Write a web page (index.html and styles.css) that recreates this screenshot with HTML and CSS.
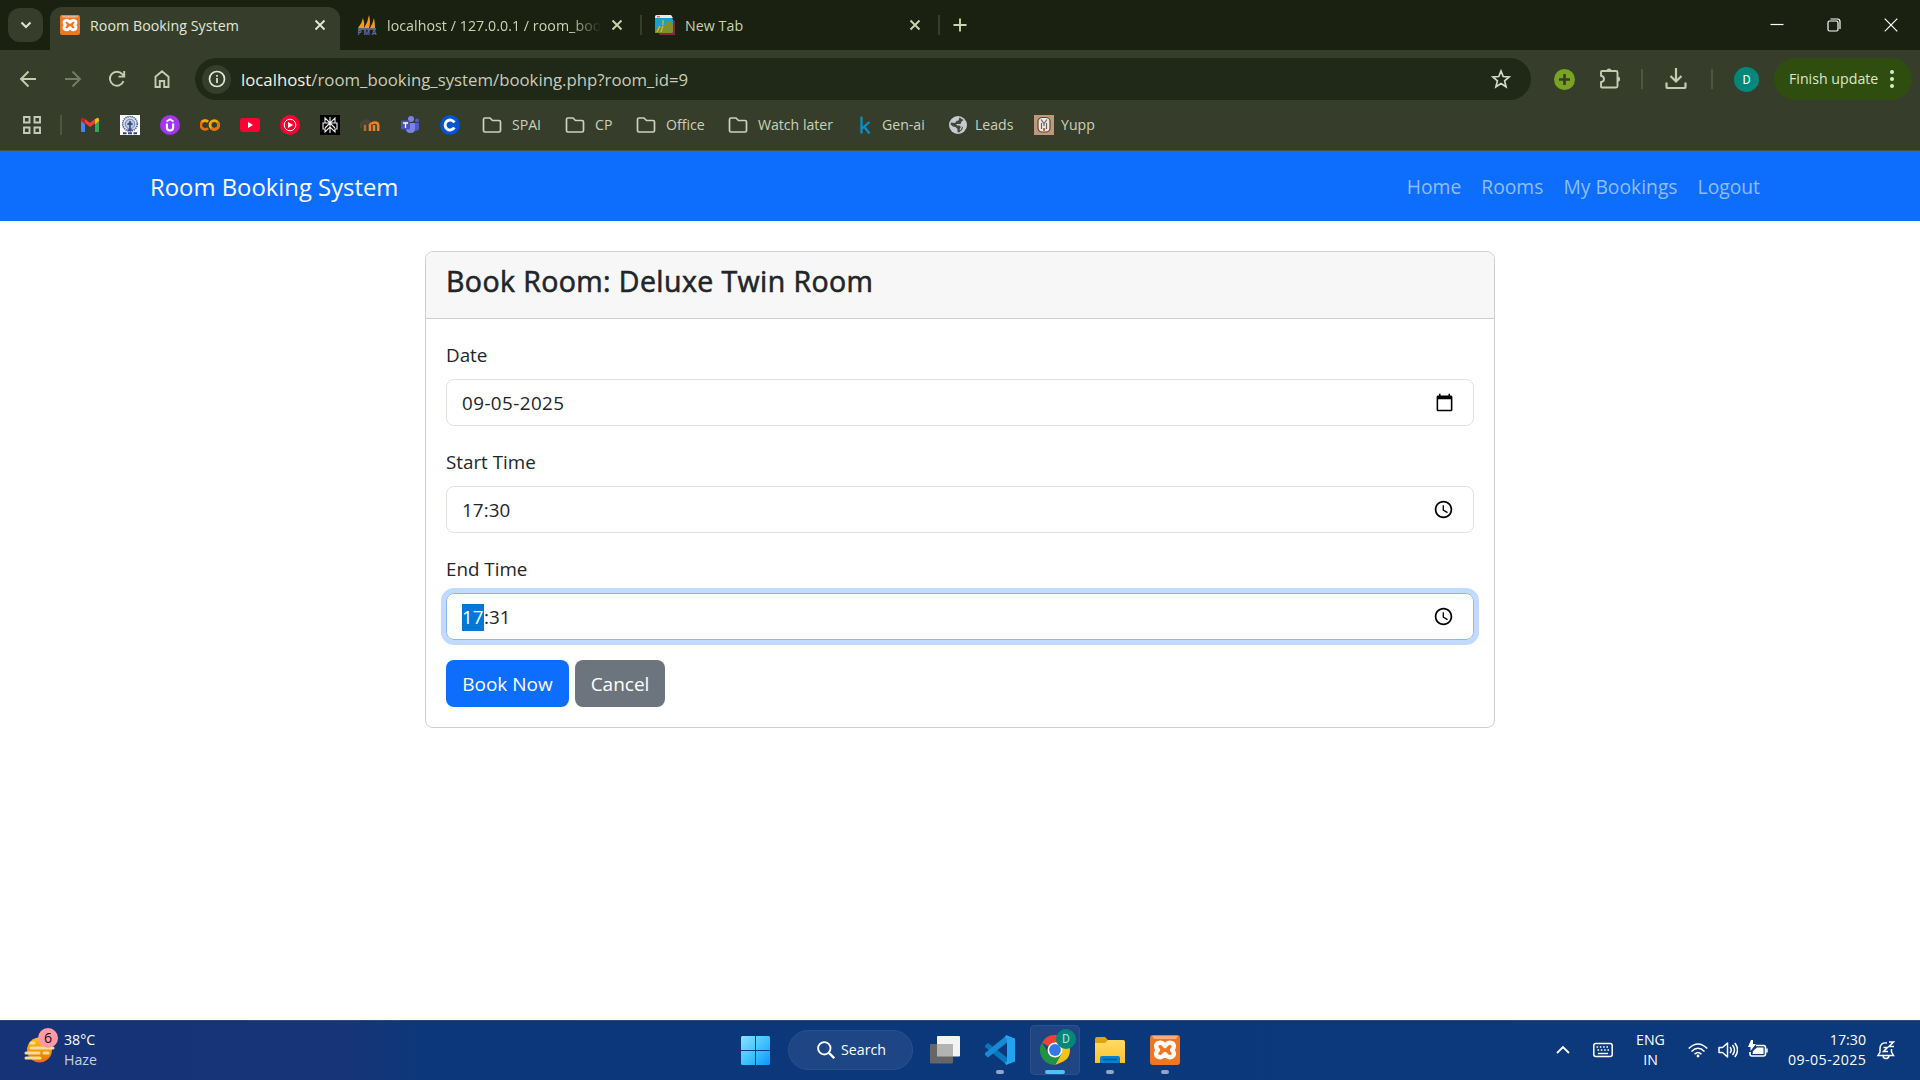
FILE: index.html
```html
<!DOCTYPE html>
<html lang="en">
<head>
<meta charset="utf-8">
<title>Room Booking System</title>
<link rel="stylesheet" href="styles.css">
</head>
<body>
<svg class="defs" width="0" height="0">
  <symbol id="xampp" viewBox="0 0 30 30"><rect width="30" height="30" rx="3" fill="#ef7623"/><path d="M2 1h26l-2 3H4z" fill="#f9ab7b"/><path d="M9 8q3-1 6 3 3-4 6-3 4 1 2.500 5l-1.500 2 1.500 2q1.500 4-2.500 5-3 1-6-3-3 4-6 3-4-1-2.500-5l1.500-2-1.500-2Q5 9 9 8z" fill="none" stroke="#fff" stroke-width="4.400" stroke-linejoin="round"/></symbol>
  <symbol id="folder" viewBox="0 0 20 20"><path d="M1.5 15.5v-11q0-1.500 1.500-1.500h5l2.500 2.500h6.500q1.500 0 1.500 1.500v8.500q0 1.500-1.500 1.500H3q-1.500 0-1.500-1.500z" fill="none" stroke="#cdd0c4" stroke-width="1.700"/></symbol>
  <symbol id="close" viewBox="0 0 12 12"><path d="M1.500 1.500l9 9m0-9l-9 9" stroke="currentColor" stroke-width="1.900"/></symbol>
  <symbol id="clock" viewBox="0 0 24 24"><path d="M11.990 2C6.470 2 2 6.480 2 12s4.470 10 9.990 10C17.520 22 22 17.520 22 12S17.520 2 11.990 2zM12 20c-4.420 0-8-3.580-8-8s3.580-8 8-8 8 3.580 8 8-3.580 8-8 8zM12.500 7H11v6l5.250 3.150.75-1.230-4.500-2.670z"/></symbol>
</svg>

<header class="browser">
  <div class="tabstrip">
    <button class="tab-search"><svg width="12" height="12" viewBox="0 0 12 12"><path d="M1.500 3.500L6 8l4.500-4.500" fill="none" stroke="#dce2cc" stroke-width="2.100"/></svg></button>
    <div class="tab active">
      <svg class="favicon"><use href="#xampp"/></svg>
      <span class="tab-title">Room Booking System</span>
      <svg class="x"><use href="#close"/></svg>
    </div>
    <div class="tab second">
      <svg class="favicon sail" viewBox="0 0 20 20"><path d="M1 13Q5 8 6 3q2 5 1 10zM7 13Q11 7 12 0q2 7 0 13zM13 13q3-5 4-10 1 5 1 10z" fill="#f39a1f"/><path d="M1 13.500h18v1H1z" fill="#a9a9bd"/><text x=".5" y="19.500" textLength="19" class="pma">PMA</text></svg>
      <span class="tab-title fade">localhost / 127.0.0.1 / room_boo</span>
      <svg class="x"><use href="#close"/></svg>
    </div>
    <i class="tab-sep"></i>
    <div class="tab third">
      <svg class="favicon" viewBox="0 0 20 20"><path d="M3 17l15-12 2 1v14H5z" fill="#8d2444"/><path d="M0 2q0-2 2-2h14l2 5v11q0 2-2 2H0z" fill="#1c9fd0"/><path d="M0 2q0-2 2-2h14l2 3H0z" fill="#e9e9ed"/><path d="M0 18q1-6 6-7l4-1 1-3 3-1 4 3v7q0 2-2 2z" fill="#7b922d"/><path d="M2 17q2-4 3-6M6 17q1-3 2-6M8 5v5" stroke="#e0ae3d" stroke-width="1.300" fill="none"/><path d="M2 1h3v1.500H2z" fill="#e66"/></svg>
      <span class="tab-title">New Tab</span>
      <svg class="x"><use href="#close"/></svg>
    </div>
    <i class="tab-sep"></i>
    <svg class="new-tab" viewBox="0 0 14 14"><path d="M7 .5v13M.5 7h13" stroke="#cbd3b5" stroke-width="1.900"/></svg>
    <div class="window-buttons">
      <svg width="14" height="14" viewBox="0 0 14 14"><path d="M.5 6.500h13" stroke="#fff" stroke-width="1.200"/></svg>
      <svg width="14" height="14" viewBox="0 0 14 14" fill="none" stroke="#fff" stroke-width="1.200"><rect x="1" y="3" width="10" height="10" rx="1.500"/><path d="M3.500 1h7q2.500 0 2.500 2.500v7.500"/></svg>
      <svg width="14" height="14" viewBox="0 0 14 14"><path d="M.7.7l12.600 12.600m0-12.600L.7 13.300" stroke="#fff" stroke-width="1.200"/></svg>
    </div>
  </div>

  <div class="toolbar">
    <div class="nav-icons">
      <svg viewBox="0 0 20 20"><path d="M18 10H3m7.500-7.500L3 10l7.500 7.500" /></svg>
      <svg class="dim" viewBox="0 0 20 20"><path d="M2 10h15M9.500 2.500L17 10l-7.500 7.500"/></svg>
      <svg viewBox="0 0 20 20"><path d="M16.500 12.200A7 7 0 1 1 15.300 5.200L17 7.200M17.200 2v5.600H11.500"/></svg>
      <svg viewBox="0 0 20 20"><path d="M3.500 18V7.800L10 2.300l6.500 5.500V18h-4.300v-6H7.800v6z"/></svg>
    </div>
    <div class="omnibox">
      <span class="site-info"><svg width="18" height="18" viewBox="0 0 18 18"><circle cx="9" cy="9" r="7.500" fill="none" stroke="#e3e7d8" stroke-width="1.700"/><path d="M9 8v5M9 5v1.800" stroke="#e3e7d8" stroke-width="1.700"/></svg></span>
      <span class="url"><b>localhost</b>/room_booking_system/booking.php?room_id=9</span>
      <svg class="star" viewBox="0 0 20 20"><path d="M10 2l2.200 5.500 6 .5-4.600 3.900 1.500 5.900-5.100-3.200-5.100 3.200 1.500-5.900L1.800 8l6-.5z" fill="none" stroke="#d5d8cc" stroke-width="1.700"/></svg>
    </div>
    <svg class="ext-add" viewBox="0 0 21 21"><circle cx="10.500" cy="10.500" r="10.500" fill="#7ba323"/><path d="M10.500 5v11M5 10.500h11" stroke="#363e2b" stroke-width="2.700"/></svg>
    <svg class="puzzle" viewBox="0 0 22 22"><path d="M2 4q0-1 1-1h14q1.500 0 1.500 1.500v13.500q0 1.500-1.500 1.500H3q-1 0-1-1v-4.300q3-.7 3-3.200T2 7.800z" fill="none" stroke="#c5cdb0" stroke-width="1.900"/><path d="M7.500 3a2.500 2.500 0 0 1 5 0zM18.500 8.500a2.600 2.600 0 0 1 0 5.200z" fill="#c5cdb0"/></svg>
    <i class="bar-sep"></i>
    <svg class="download" viewBox="0 0 22 22"><path d="M11 0v13M5.500 8l5.500 5.500L16.500 8M1.500 14.500v4q0 1.500 1.500 1.500h16q1.500 0 1.500-1.500v-4" fill="none" stroke="#c5cdb0" stroke-width="2.200"/></svg>
    <i class="bar-sep"></i>
    <span class="avatar">D</span>
    <div class="update"><span>Finish update</span><svg width="4" height="18" viewBox="0 0 4 18" fill="#dce9c6"><circle cx="2" cy="2" r="2"/><circle cx="2" cy="9" r="2"/><circle cx="2" cy="16" r="2"/></svg></div>
  </div>

  <div class="bookmarks">
    <svg class="apps" viewBox="0 0 18 18" fill="none" stroke="#c7cabb" stroke-width="1.900"><path d="M1 1h5.500v5.500H1zM11.500 1H17v5.500h-5.500zM1 11.500h5.500V17H1zM11.500 11.500H17V17h-5.500z"/></svg>
    <i class="bar-sep"></i>
    <div class="sites">
      <svg viewBox="0 0 20 20"><path d="M1 4.500l4 3V17H2q-1 0-1-1z" fill="#4285f4"/><path d="M15 7.500l4-3V16q0 1-1 1h-3z" fill="#34a853"/><path d="M5 8V4l5 3.800L15 4v4.500L10 12z" fill="#ea4335"/><path d="M1 5q0-3 2.500-1.800L5 4.200v5L1 6z" fill="#c5221f"/><path d="M19 5q0-3-2.500-1.800L15 4.200v5L19 6z" fill="#fbbc04"/></svg>
      <svg viewBox="0 0 20 20"><path d="M0 0h20v20H0z" fill="#fff"/><circle cx="10" cy="8.800" r="7.300" fill="#dfe5ef" stroke="#4a5a98" stroke-width="1.600" stroke-dasharray="1.300 .8"/><circle cx="10" cy="9" r="4.800" fill="#b9cbdc" stroke="#7087b5"/><path d="M10 6v10M7.500 9.500L10 8l2.500 1.500M7.500 15h5" fill="none" stroke="#37457f" stroke-width="1.600"/><path d="M3 18.300h3.500M8 18.300h4M13.500 18.300H17" stroke="#34407d" stroke-width="2"/></svg>
      <svg viewBox="0 0 20 20"><circle cx="10" cy="10" r="10" fill="#a435f0"/><path d="M6.900 8.500v4q0 3 3.100 3t3.100-3v-4" fill="none" stroke="#fff" stroke-width="2.200"/><path d="M6.500 6.500L10 4.200l3.500 2.300" fill="none" stroke="#fff" stroke-width="1.700"/></svg>
      <svg viewBox="0 0 20 20" fill="none" stroke-width="2.800"><path d="M8 6.800a4.300 4.300 0 1 0 0 6.500" stroke="#e8710a"/><circle cx="14.300" cy="10" r="4.300" stroke="#f9ab00"/><path d="M8 6.800a4.300 4.300 0 0 0-6 0" stroke="#f9ab00"/><path d="M11.200 13a4.300 4.300 0 0 0 6.200-6" stroke="#e8710a"/></svg>
      <svg viewBox="0 0 20 20"><rect y="3" width="20" height="14" rx="3" fill="#ff0033"/><path d="M8 7v6l5-3z" fill="#fff"/></svg>
      <svg viewBox="0 0 20 20"><circle cx="10" cy="10" r="10" fill="#ff0033"/><circle cx="10" cy="10" r="5.800" fill="none" stroke="#fff"/><path d="M8 7v6l5-3z" fill="#fff"/></svg>
      <svg viewBox="0 0 20 20"><path d="M0 0h20v20H0z" fill="#000"/><path d="M10 2v16M5 3l5 5 5-5v5H5zM3 8h14v6h-2v3l-5-5-5 5v-3H3zM10 8l-5 5m5-5l5 5" fill="none" stroke="#eee" stroke-width="1.100"/></svg>
      <svg viewBox="0 0 20 20"><path d="M10 16v-4q0-3-1-4.500M11.500 9.500Q12 7.500 15 7.500q3.200 0 3.200 3V16M14 16v-6" fill="none" stroke="#f08023" stroke-width="2.600"/><path d="M5 16V9" stroke="#b9682c" stroke-width="2.600"/><path d="M0 7l6-3 5 2-2 3.500-5 .5z" fill="#4a4239"/><path d="M1 8v5" stroke="#675038"/></svg>
      <svg viewBox="0 0 20 20"><circle cx="11" cy="4" r="3" fill="#7b83eb"/><circle cx="17" cy="5.500" r="2" fill="#5059c9"/><path d="M13 8h6v5q0 3-4 3z" fill="#5059c9"/><path d="M6 8h9v6q0 4-4.500 4T6 14z" fill="#7b83eb"/><rect x="1" y="5.500" width="9" height="9" rx="1" fill="#4b53bc"/><path d="M3 8h5M5.500 8v5" stroke="#fff" stroke-width="1.300"/></svg>
      <svg viewBox="0 0 20 20"><circle cx="10" cy="10" r="10" fill="#0056d2"/><path d="M14.400 7.400a5 5 0 1 0 0 5.200" fill="none" stroke="#fff" stroke-width="2.900"/></svg>
    </div>
    <div class="bm b1"><svg><use href="#folder"/></svg><span>SPAI</span></div>
    <div class="bm b2"><svg><use href="#folder"/></svg><span>CP</span></div>
    <div class="bm b3"><svg><use href="#folder"/></svg><span>Office</span></div>
    <div class="bm b4"><svg><use href="#folder"/></svg><span>Watch later</span></div>
    <div class="bm b5"><svg viewBox="0 0 20 20"><path d="M6.500 1.500v17M14.500 7L7 13.500M9 11.500l5.500 7" fill="none" stroke="#0c8fc7" stroke-width="2.300"/></svg><span>Gen-ai</span></div>
    <div class="bm b6"><svg viewBox="0 0 20 20"><circle cx="10" cy="10" r="9" fill="#c7cad0"/><path d="M11.500 2.500l4 2.500-2 1.500-1 2.500H9v1.500h4l2 2-1 2.500-3 2.500-1.500-.5v-3l-2-2L5 11.500 2.500 9.500l.5-2 4 .5 1.500-2 2-.5z" fill="#40483a"/><path d="M8.500 9.500l3 0 2 2.500-1.500 3" fill="none" stroke="#c7cad0" stroke-width="1.200"/></svg><span>Leads</span></div>
    <div class="bm b7"><svg viewBox="0 0 20 20"><path d="M0 0h20v20H0z" fill="#bf9878"/><rect x="4" y="2.500" width="12" height="14.500" rx="4" fill="#eee8df" stroke="#554b43" stroke-width="1.200"/><path d="M7 4.500l3 4 3-4M7.500 8v6M12.500 8v6M10 8v3" stroke="#6b625b" stroke-width="1.200" fill="none"/><path d="M9 13h2v3H9z" fill="#dd5e35"/></svg><span>Yupp</span></div>
  </div>
</header>

<nav class="navbar">
  <a class="brand">Room Booking System</a>
  <div class="links"><a>Home</a><a>Rooms</a><a>My Bookings</a><a>Logout</a></div>
</nav>

<main class="page">
  <section class="card">
    <div class="card-header"><h4>Book Room: Deluxe Twin Room</h4></div>
    <form class="card-body">
      <label>Date</label>
      <div class="control"><span class="date">09-05-2025</span><svg viewBox="0 0 24 24"><path d="M20 3h-1V1h-2v2H7V1H5v2H4c-1.100 0-2 .9-2 2v16c0 1.100.9 2 2 2h16c1.100 0 2-.9 2-2V5c0-1.100-.9-2-2-2zm0 18H4V8h16v13z"/></svg></div>
      <label>Start Time</label>
      <div class="control time"><span>17:30</span><svg><use href="#clock"/></svg></div>
      <label>End Time</label>
      <div class="control time focused"><span><mark>17</mark>:31</span><svg><use href="#clock"/></svg></div>
      <div class="actions"><a class="btn primary">Book Now</a><a class="btn secondary">Cancel</a></div>
    </form>
  </section>
</main>

<footer class="taskbar">
  <div class="weather">
    <div class="weather-icon">
      <svg width="32" height="30" viewBox="0 0 32 30"><defs><linearGradient id="sun" x2="0" y2="1"><stop stop-color="#ffc50a"/><stop offset="1" stop-color="#ef6a07"/></linearGradient></defs><circle cx="15.500" cy="13" r="12.500" fill="url(#sun)"/><path d="M7 6h3M7 11h22M2 16h13M20 16h4M2 21h14" stroke="#f4dc9b" stroke-width="3" stroke-linecap="round"/></svg>
      <span class="badge">6</span>
    </div>
    <div class="weather-text"><span>38°C</span><span class="haze">Haze</span></div>
  </div>
  <div class="apps-row">
    <svg class="start" viewBox="0 0 29 29"><defs><linearGradient id="win" x2="1" y2="1"><stop stop-color="#8be0ff"/><stop offset=".5" stop-color="#43c4ff"/><stop offset="1" stop-color="#0a97fa"/></linearGradient></defs><path d="M1 0h13v14H0V1zM15 0h13l1 1v13H15zM0 15h14v14H1l-1-1zM15 15h14v13l-1 1H15z" fill="url(#win)"/></svg>
    <div class="search"><svg width="18" height="18" viewBox="0 0 18 18"><circle cx="7.300" cy="7.300" r="6.200" fill="none" stroke="#fff" stroke-width="1.900"/><path d="M11.800 11.800l5.400 5.400" stroke="#fff" stroke-width="2.300"/></svg><span>Search</span></div>
    <svg class="task-view" viewBox="0 0 30 30"><rect x="7" y="1" width="23" height="20.500" rx="1" fill="#f3f3f3"/><rect y="9" width="23" height="19.500" rx="1" fill="#666"/><path d="M7 9h16v12.500H7z" fill="#b3b3b3"/></svg>
    <div class="app"><svg viewBox="0 0 30 30"><path d="M0 10.500l3-2.500L24 24l-2 6L0 12z" fill="#0877bd"/><path d="M0 20l3 2.500L24 6 22 0 0 18z" fill="#148bd4"/><path d="M21 0l9 3.500v23L21 30l-1-2.500 2-1V4l-2-1.500z" fill="#23a4f2"/></svg><i></i></div>
    <div class="app current"><svg viewBox="0 0 30 30"><path d="M15 15L2 7.500A15 15 0 0 1 28 7.500z" fill="#ea4335"/><path d="M15 7.500h13q2 3.500 2 7.500t-2 7.500-13 7.500l6.500-11.300z" fill="#fbc116"/><path d="M8.500 18.800L2 7.500A15 15 0 0 0 15 30l6.500-11.300z" fill="#229342"/><circle cx="15" cy="15" r="7.500" fill="#fff"/><circle cx="15" cy="15" r="5.900" fill="#3478e8"/></svg><span class="profile">D</span><i></i></div>
    <div class="app"><svg viewBox="0 0 30 30"><path d="M0 4q0-2 2-2h8l3 3v7H0z" fill="#e2a20b"/><defs><linearGradient id="fold" x2="0" y2="1"><stop stop-color="#ffd968"/><stop offset="1" stop-color="#ffc526"/></linearGradient></defs><path d="M0 8h10l3-3h15q2 0 2 2v21H0z" fill="url(#fold)"/><path d="M5 28v-5q0-2 2-2h16q2 0 2 2v5z" fill="#087fd1"/><path d="M8 24.500h14" stroke="#075397" stroke-width="1.300"/></svg><i></i></div>
    <div class="app"><svg><use href="#xampp"/></svg><i></i></div>
  </div>
  <div class="tray">
    <svg class="chev" viewBox="0 0 14 14"><path d="M1 10l6-6 6 6" fill="none" stroke="#fff" stroke-width="1.900"/></svg>
    <svg class="keyboard" viewBox="0 0 20 16" fill="none" stroke="#fff"><rect x=".8" y="1.500" width="18.400" height="13" rx="2" stroke-width="1.500"/><path d="M3.500 5h13M4.500 8h12" stroke-width="1.600" stroke-dasharray="1.600 1.700"/><path d="M5 11.500h10" stroke-width="1.400"/></svg>
    <div class="lang"><span>ENG</span><span>IN</span></div>
    <div class="status">
      <svg viewBox="0 0 20 20" fill="none" stroke="#fff" stroke-width="1.500"><path d="M.7 8.500q9.300-9 18.600 0M3.500 11.500q6.500-6.500 13 0M6.500 14.300q3.500-3.500 7 0"/><circle cx="10" cy="16" r="1.400" fill="#fff" stroke="none"/></svg>
      <svg viewBox="0 0 20 20" fill="none" stroke="#fff" stroke-width="1.500"><path d="M1 7.500h3.500L9.500 3v14l-5-4.500H1z" stroke-linejoin="round"/><path d="M12 7q2.500 3 0 6M14.500 5q4 5 0 10M16.800 3q5.500 7 0 14"/></svg>
      <svg viewBox="0 0 20 20"><path d="M8 5.500h7.500q2 0 2 2v6.500q0 2-2 2H4q-2 0-2-2v-2" fill="none" stroke="#fff" stroke-width="1.600"/><path d="M9 7.500h6.500v6.500H4.500l.5-3zM18.200 8.500h1.500v4h-1.500zM3 0h2v4h3L2.500 11V7H0z" fill="#fff"/></svg>
    </div>
    <div class="clock"><span>17:30</span><span class="today">09-05-2025</span></div>
    <svg class="bell" viewBox="0 0 20 20" fill="none" stroke="#fff" stroke-width="1.500"><path d="M11 3Q4 2 4 9v3l-2 3.500h15.500L15.500 12V9M7 16q.5 2.500 3 2.500t3-2.500"/><path d="M7.500 7.500h4l-4 4h4.500M13 2h4.500L13 6.500h5"/></svg>
  </div>
</footer>
</body>
</html>
```
FILE: styles.css
```css
* { box-sizing: border-box; }
body { margin: 0; width: 1920px; height: 1080px; overflow: hidden; display: flex; flex-direction: column; background: #fff; font: 14.2px/20px "Open Sans", "Noto Sans", sans-serif; color: #212529; }
svg, i { display: block; flex: none; }
span, a { white-space: nowrap; }
h4, form { margin: 0; }
.defs { position: absolute; }

.browser { flex: none; height: 151px; background: #363e2b; border-bottom: 1px solid #4b5042; }
.tabstrip { height: 50px; display: flex; align-items: center; background: #1a2110; color: #cbd3b5; }
.tab-search { flex: none; width: 35px; height: 34px; margin: 0 7px 0 8px; padding: 0; border: 0; border-radius: 12px; background: #363e2b; display: flex; align-items: center; justify-content: center; }
.tab { display: flex; align-items: center; height: 43px; }
.tab.active { align-self: flex-end; width: 290px; padding: 0 14px 7px 10px; background: #363e2b; border-radius: 12px 12px 0 0; color: #e3e7d8; }
.tab.second { width: 300px; padding: 0 17px; }
.tab.third { width: 296px; padding: 0 17px 0 13px; }
.favicon { width: 20px; height: 20px; margin-right: 10px; }
.sail { overflow: visible; }
.pma { font: bold 7px "Open Sans", sans-serif; fill: #686ca5; }
.tab-title { padding-top: 2px; margin-right: auto; letter-spacing: .06px; }
.fade { -webkit-mask-image: linear-gradient(90deg, #000 86%, transparent); mask-image: linear-gradient(90deg, #000 86%, transparent); }
.x { width: 12px; height: 12px; }
.tab-sep { width: 2px; height: 20px; background: #363e2b; }
.new-tab { width: 14px; height: 14px; margin-left: 13px; }
.window-buttons { display: flex; gap: 43px; margin-left: auto; padding-right: 22px; }

.toolbar { height: 58px; display: flex; align-items: center; background: #363e2b; border-radius: 10px 10px 0 0; box-shadow: 0 -10px 0 -0px transparent; }
.nav-icons { display: flex; gap: 24.500px; width: 195px; padding-left: 18px; }
.nav-icons svg { width: 20px; height: 20px; fill: none; stroke: #c5cdb0; stroke-width: 1.900; }
.nav-icons .dim { stroke: #747d65; }
.omnibox { width: 1336px; height: 42px; border-radius: 21px; background: #202817; display: flex; align-items: center; padding: 0 20px 0 7px; }
.site-info { width: 29px; height: 29px; border-radius: 50%; background: #363e2b; display: flex; align-items: center; justify-content: center; }
.url { flex: 1; margin-left: 10px; padding-top: 1px; font-size: 16.800px; color: #c8ccbc; }
.url b { font-weight: 400; color: #f0f3e4; }
.star { width: 20px; height: 20px; }
.ext-add { width: 21px; height: 21px; margin-left: 23px; }
.puzzle { width: 22px; height: 22px; margin: 0 20px 0 24px; }
.bar-sep { width: 2px; height: 20px; background: #4d573d; }
.download { width: 22px; height: 22px; margin: 0 24px 0 22px; }
.avatar { width: 25px; height: 25px; margin: 0 15px 0 21px; border-radius: 50%; background: #00897b; color: #fff; font: 12.500px/25px Roboto, sans-serif; text-align: center; }
.update { width: 138px; height: 42px; border-radius: 21px; background: #304d10; color: #dce9c6; display: flex; align-items: center; justify-content: space-between; padding: 0 18px 0 15px; }

.bookmarks { height: 34px; display: flex; align-items: center; color: #cbd0bd; font-size: 14.100px; }
.apps { width: 18px; height: 18px; margin: 0 19px 0 23px; }
.sites { display: flex; gap: 20px; margin-left: 18px; }
.sites svg, .bm svg { width: 20px; height: 20px; }
.bm { display: flex; align-items: center; gap: 10px; }
.b1 { margin-left: 22px; width: 83px; }
.b2 { width: 71px; }
.b3 { width: 92px; }
.b4 { width: 127px; }
.b5 { width: 93px; gap: 7px; }
.b6 { width: 86px; gap: 7px; }
.b7 { gap: 7px; }

.navbar { flex: none; height: 70px; background: #0d6efd; display: flex; align-items: center; justify-content: space-between; padding: 1px 160px 0 150px; }
.brand { color: #fff; font-size: 23.850px; line-height: 38px; }
.links { display: flex; gap: 20px; font-size: 19.300px; color: #90bdfe; }

.page { flex: 1; display: flex; justify-content: center; align-items: flex-start; padding-top: 30px; }
.card { width: 1070px; border: 1px solid #cfcfd0; border-radius: 8px; overflow: hidden; }
.card-header { height: 67px; padding: 11px 20px 9px; background: #f7f7f7; border-bottom: 1px solid #cfcfd0; }
h4 { font-size: 28.500px; line-height: 36px; font-weight: 400; -webkit-text-stroke: .6px #212529; letter-spacing: .42px; }
.card-body { display: flex; flex-direction: column; padding: 20px; font-size: 18.800px; line-height: 30px; }
label { height: 30px; padding-top: 1px; margin-bottom: 10px; }
.control { height: 47px; margin-bottom: 20px; padding: 0 19px 0 15px; border: 1px solid #dee2e6; border-radius: 8px; display: flex; align-items: center; justify-content: space-between; }
.control span { letter-spacing: .1px; }
.control .date { padding-top: 1px; letter-spacing: .45px; }
.control svg { width: 19px; height: 19px; }
.control.time svg { width: 21px; height: 21px; }
.focused { border-color: #86b7fe; box-shadow: 0 0 0 5px #c2daff; }
mark { display: inline-block; width: 22px; height: 27px; line-height: 27px; background: #0078d7; color: #fff; }
.actions { display: flex; gap: 6px; }
.btn { height: 47px; line-height: 49px; border-radius: 8px; color: #fff; text-align: center; font-size: 19px; }
.primary { width: 123px; background: #0d6efd; }
.secondary { width: 90px; background: #6c757d; }

.taskbar { flex: none; height: 60px; display: grid; grid-template-columns: 741px 1fr 361px; background: linear-gradient(90deg, #173377 0, #173477 340px, #0c387b 420px, #0b397b 100%); border-top: 1px solid #2b4c7d; color: #fff; }
.weather { display: flex; align-items: flex-start; padding: 8px 0 0 24px; }
.weather-icon { position: relative; width: 40px; padding-top: 8px; }
.badge { position: absolute; left: 14px; top: -1px; width: 20px; height: 20px; border-radius: 50%; background: #ff99a4; color: #111; text-align: center; }
.weather-text, .lang, .clock { display: flex; flex-direction: column; }
.weather-text { padding-top: 1px; }
.haze { color: #c7d0e3; }
.apps-row { display: flex; align-items: center; height: 58px; }
.start { width: 29px; height: 29px; margin-right: 18px; }
.search { width: 125px; height: 40px; margin-right: 17px; border: 1px solid #28508e; border-radius: 20px; background: #1e4685; display: flex; align-items: center; gap: 6px; padding-left: 28px; }
.task-view { width: 30px; height: 30px; margin-right: 15px; }
.app { position: relative; width: 50px; height: 50px; margin-right: 5px; padding: 10px; }
.app > svg { width: 30px; height: 30px; }
.app i { position: absolute; left: 21px; bottom: 1px; width: 8px; height: 4px; border-radius: 2px; background: #93a6c7; }
.current { border-radius: 5px; background: #1f4683; box-shadow: inset 0 0 0 1px #2c528c; }
.current i { left: 15px; width: 20px; background: #4cc2ff; }
.profile { position: absolute; left: 26px; top: 4px; width: 20px; height: 20px; border-radius: 50%; background: #00897b; color: #b7ded9; font: 12px/20px Roboto, sans-serif; text-align: center; }
.tray { display: flex; align-items: center; height: 58px; }
.chev { width: 14px; height: 14px; margin: 0 23px 0 -3px; }
.keyboard { width: 20px; height: 16px; }
.lang { width: 75px; text-align: center; }
.status { display: flex; gap: 10px; }
.status svg, .bell { width: 20px; height: 20px; }
.clock { width: 98px; text-align: right; margin-right: 10px; }
.today { letter-spacing: .45px; margin-right: -.45px; }
```
